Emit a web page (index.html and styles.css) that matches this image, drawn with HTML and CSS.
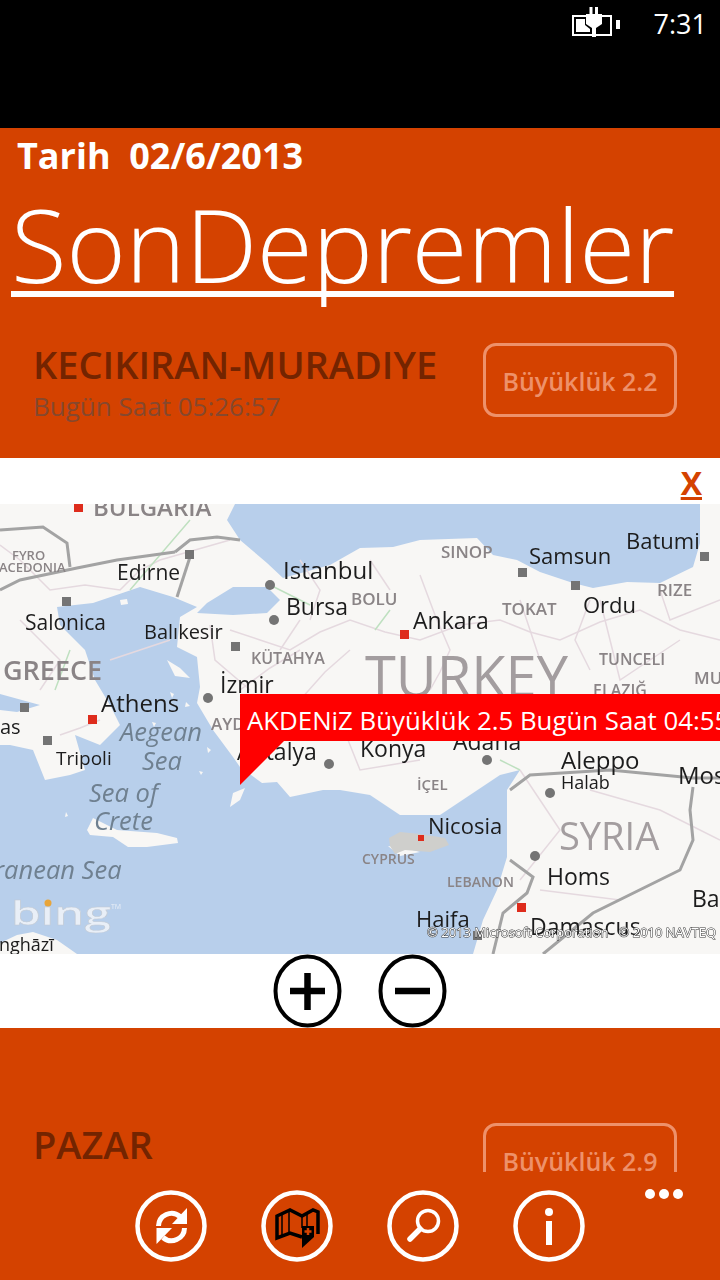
FILE: index.html
```html
<!DOCTYPE html>
<html lang="en">
<head>
    <meta charset="UTF-8">
    <meta name="viewport" content="width=device-width, initial-scale=1.0">
    <title>SonDepremler</title>
    <link rel="stylesheet" href="styles.css">
</head>
<body>

<div class="status-bar">
    <svg class="battery" width="50" height="32" viewBox="570 7 50 32">
        <path class="battery-line" d="M573 17H611V36H573Z"/>
        <path class="battery-fill" d="M576 20H585V26L590 30V33H576Z"/>
        <path class="battery-fill" d="M616 21H620V30H616Z"/>
        <path class="battery-fill" d="M589.500 8H592.500V15H595V8H598V15H602V25L596 29V38H592V29L586 25V15H589.500Z"/>
    </svg>
    <span class="clock">7:31</span>
</div>

<header class="page-head">
    <div class="date-line">Tarih  02/6/2013</div>
    <h1 class="app-title">SonDepremler</h1>
</header>

<section class="quake-row">
    <div class="quake-info">
        <div class="quake-place">KECIKIRAN-MURADIYE</div>
        <div class="quake-time">Bugün Saat 05:26:57</div>
    </div>
    <div class="quake-size">Büyüklük 2.2</div>
</section>

<section class="map-panel">
    <div class="close-row"><a class="close-link">X</a></div>
    <div class="map-box">
        <svg class="map" width="720" height="450" viewBox="0 504 720 450">
            <rect class="sea" x="0" y="504" width="720" height="450"/>
            <!-- land -->
            <path class="land" d="M0 504H235L227 520L240 540L267 563L283 578L330 565L360 548L393 547L420 540L477 538L493 555L517 560L540 572L573 583L593 588L627 582L660 583L693 567L700 543L700 504H720V954H473L483 920L497 890L507 857L507 817L507 790L520 770L500 775L470 795L440 815L400 815L370 795L340 790L323 790L290 797L277 782L262 783L240 767L233 757L213 730L197 703L200 687L197 657L177 647L180 617L197 607L173 597L140 587L93 603L57 607L60 625L85 650L95 680L110 705L120 725L100 745L75 735L85 770L70 775L45 780L33 750L10 745L0 745Z"/>
            <path class="sea" d="M0 694L40 705L17 712L0 710Z"/>
            <path class="sea" d="M197 613L207 603L233 587L267 587L280 600L267 613L233 615Z"/>
            <path class="land" d="M87 830L93 818L117 830L157 833L177 838L178 843L147 847L128 847L113 837L90 835Z"/>
            <path class="land" d="M230 807L233 793L245 788L240 800Z"/>
            <path class="land" d="M0 943L17 935L33 932L57 940L77 954H0Z"/>
            <path class="land" d="M167 660L180 668L190 678L175 676Z"/>
            <path class="land" d="M120 600L127 599L128 604L121 605Z"/>
            <path class="land" d="M170 692L174 694L172 698ZM186 702L190 706L185 707ZM152 722L156 723L154 727ZM207 747L211 750L208 753ZM199 771L203 772L201 775ZM66 812L68 816L65 817Z"/>
            <path class="land" d="M388 846L400 856L420 852L405 848Z"/>
            <path class="cyprus-rim" d="M389 838L400 832L420 834L445 838L449 845L430 852L405 850L395 854L390 846Z"/>
            <!-- province lines -->
            <g class="province">
                <path d="M0 545L20 560L50 590L85 585L120 590L140 570L160 560L195 550L230 540"/>
                <path d="M20 620L40 640L60 660L50 675L40 690M110 660L140 650L170 640M60 735L80 728L100 720"/>
                <path d="M230 630L260 640L290 650L320 632L350 620L385 632L420 640L460 625L500 620L530 632L560 640L600 622L640 610L680 630L720 640"/>
                <path d="M240 690L270 668L300 650M300 700L325 672L350 650M420 575L435 615L450 650L440 672L430 690M520 600L530 630L540 660M600 600L610 640L620 680L650 660L680 640"/>
                <path d="M250 740L295 730L340 720L350 745L360 770L390 765L420 760M520 770L540 800L560 830L540 855L520 880M540 890L580 895L620 900L650 885L680 870M590 790L625 800L660 810L690 825L720 840"/>
                <path d="M300 560L320 590L310 620M370 560L390 590M590 600L575 640L590 670M660 590L670 620L720 600M210 625L215 660L250 690M280 650L300 620"/>
            </g>
            <g class="road">
                <path d="M130 590L160 555L190 520M270 585L310 605M390 610L375 630M70 650L55 690M500 760L520 770"/>
            </g>
            <!-- country borders -->
            <g class="border">
                <path d="M0 590L20 580L77 568L117 560L175 552"/>
                <path d="M0 530L43 527L67 543L70 567"/>
                <path d="M175 552L190 540L217 537L240 540"/>
                <path d="M190 557L177 597"/>
                <path d="M510 790L530 775L610 770L693 778L720 778"/>
                <path d="M693 787L690 810L693 840L680 870L593 913L543 954"/>
                <path d="M510 860L533 877L527 893L503 913L493 954"/>
            </g>
            <!-- towns -->
            <g class="dot">
                <rect x="62" y="597" width="9" height="9"/><rect x="185" y="550" width="9" height="9"/>
                <rect x="231" y="642" width="9" height="9"/><rect x="20" y="703" width="9" height="9"/>
                <rect x="43" y="736" width="9" height="9"/><rect x="518" y="568" width="9" height="9"/>
                <rect x="571" y="581" width="9" height="9"/><rect x="700" y="552" width="9" height="9"/>
                <rect x="473" y="931" width="9" height="9"/>
                <circle cx="270" cy="585" r="5"/><circle cx="274" cy="620" r="5"/>
                <circle cx="208" cy="698" r="5"/><circle cx="329" cy="764" r="5"/>
                <circle cx="487" cy="760" r="5"/><circle cx="550" cy="793" r="5"/>
                <circle cx="535" cy="856" r="5"/>
            </g>
            <g class="capital">
                <rect x="74" y="503" width="9" height="9"/><rect x="88" y="715" width="9" height="9"/>
                <rect x="400" y="630" width="9" height="9"/><rect x="418" y="835" width="6" height="6"/>
                <rect x="517" y="903" width="9" height="9"/>
            </g>
            <!-- labels -->
            <g class="region">
                <text x="93" y="516" font-size="24">BULGARIA</text>
                <text x="12" y="560" font-size="13">FYRO</text>
                <text x="-1" y="572" font-size="13">ACEDONIA</text>
                <text x="351" y="605" font-size="17">BOLU</text>
                <text x="441" y="558" font-size="17">SINOP</text>
                <text x="502" y="615" font-size="17">TOKAT</text>
                <text x="657" y="596" font-size="17">RIZE</text>
                <text x="251" y="664" font-size="16">KÜTAHYA</text>
                <text x="599" y="665" font-size="16">TUNCELI</text>
                <text x="694" y="684" font-size="17">MU</text>
                <text x="211" y="730" font-size="17">AYDIN</text>
                <text x="3" y="680" font-size="27">GREECE</text>
                <text x="365" y="697" font-size="56" class="big">TURKEY</text>
                <text x="593" y="696" font-size="16">ELAZIĞ</text>
                <text x="417" y="790" font-size="15">İÇEL</text>
                <text x="362" y="864" font-size="14">CYPRUS</text>
                <text x="447" y="887" font-size="14">LEBANON</text>
                <text x="559" y="850" font-size="38" class="big">SYRIA</text>
            </g>
            <g class="city">
                <text x="117" y="580" font-size="21">Edirne</text>
                <text x="283" y="579" font-size="24">Istanbul</text>
                <text x="286" y="615" font-size="23">Bursa</text>
                <text x="413" y="629" font-size="23">Ankara</text>
                <text x="529" y="564" font-size="22">Samsun</text>
                <text x="626" y="549" font-size="22">Batumi</text>
                <text x="583" y="613" font-size="22">Ordu</text>
                <text x="25" y="630" font-size="21">Salonica</text>
                <text x="144" y="639" font-size="20">Balıkesir</text>
                <text x="220" y="693" font-size="23">İzmir</text>
                <text x="101" y="712" font-size="24">Athens</text>
                <text x="0" y="734" font-size="20">as</text>
                <text x="56" y="765" font-size="19">Tripoli</text>
                <text x="237" y="760" font-size="23">Antalya</text>
                <text x="360" y="757" font-size="23">Konya</text>
                <text x="453" y="750" font-size="23">Adana</text>
                <text x="561" y="769" font-size="24">Aleppo</text>
                <text x="561" y="789" font-size="18">Halab</text>
                <text x="678" y="784" font-size="24">Mos</text>
                <text x="428" y="834" font-size="22">Nicosia</text>
                <text x="547" y="885" font-size="23">Homs</text>
                <text x="692" y="907" font-size="23">Ba</text>
                <text x="416" y="927" font-size="22">Haifa</text>
                <text x="530" y="935" font-size="23">Damascus</text>
                <text x="-1" y="951" font-size="18">nghāzī</text>
            </g>
            <g class="water-name">
                <text x="120" y="741">Aegean</text>
                <text x="142" y="770">Sea</text>
                <text x="89" y="802">Sea of</text>
                <text x="94" y="830">Crete</text>
                <text x="-6" y="879">ranean Sea</text>
            </g>
            <text class="bing" transform="translate(11 925) scale(1.45 1)">bing</text>
            <circle class="bing-dot" cx="48" cy="903" r="3.500"/>
            <text class="bing-tm" x="111" y="909">TM</text>
            <text class="copyright" x="427" y="937">© 2013 Microsoft Corporation   © 2010 NAVTEQ</text>
        </svg>
        <div class="map-pop">
            <div class="map-pop-text">AKDENiZ Büyüklük 2.5 Bugün Saat 04:55</div>
            <div class="map-pop-tail"></div>
        </div>
    </div>
    <div class="zoom-row">
        <svg class="zoom-btn" width="70" height="74" viewBox="0 0 70 74">
            <ellipse cx="34.500" cy="37" rx="32" ry="34.500"/>
            <path d="M17 37H52M34.500 19V56"/>
        </svg>
        <svg class="zoom-btn" width="70" height="74" viewBox="0 0 70 74">
            <ellipse cx="34.500" cy="37" rx="32" ry="34.500"/>
            <path d="M17 37H52"/>
        </svg>
    </div>
</section>

<section class="quake-row quake-row-cut">
    <div class="quake-info">
        <div class="quake-place">PAZAR</div>
    </div>
    <div class="quake-size">Büyüklük 2.9</div>
</section>

<footer class="app-bar">
    <svg class="bar-btn" width="72" height="72" viewBox="0 0 72 72">
        <ellipse class="ring" cx="36" cy="36" rx="33.500" ry="33.500"/>
        <path class="white-line" d="M23.500 36A13 13 0 0 1 45 26.500"/>
        <path class="white-fill" d="M52 18V34H37Z"/>
        <path class="white-line" d="M49.500 38A13 13 0 0 1 28 47.500"/>
        <path class="white-fill" d="M21.500 54V38H37Z"/>
    </svg>
    <svg class="bar-btn" width="72" height="72" viewBox="0 0 72 72">
        <ellipse class="ring" cx="36" cy="36" rx="33.500" ry="33.500"/>
        <path class="map-line" d="M41 47L29 43L16 48V26L29 20L41 26L52 20L57 22V44"/>
        <path class="map-fold" d="M28 20V43M41 26V38M46 22V36M21 25V45"/>
        <path class="map-pin" d="M41 36H53V47L41 58Z"/>
        <path class="map-plus" d="M47 38V45M43.500 41.500H50.500"/>
    </svg>
    <svg class="bar-btn" width="72" height="72" viewBox="0 0 72 72">
        <ellipse class="ring" cx="36" cy="36" rx="33.500" ry="33.500"/>
        <circle class="glass" cx="41" cy="31" r="10.500"/>
        <path class="handle" d="M33 39L23 49"/>
    </svg>
    <svg class="bar-btn" width="72" height="72" viewBox="0 0 72 72">
        <ellipse class="ring" cx="36" cy="36" rx="33.500" ry="33.500"/>
        <circle class="white-fill" cx="36" cy="22" r="4"/>
        <rect class="white-fill" x="33" y="31" width="6" height="24"/>
    </svg>
    <div class="more-dots"><i></i><i></i><i></i></div>
</footer>

</body>
</html>
```

FILE: styles.css
```css
body {
    margin: 0;
    width: 720px;
    height: 1280px;
    overflow: hidden;
    background-color: #d44200;
    font-family: "Open Sans", sans-serif;
    color: white;
}

/* top black bar */
.status-bar {
    height: 128px;
    box-sizing: border-box;
    background-color: black;
    padding: 6px 13px 0 570px;
    display: flex;
    justify-content: space-between;
    align-items: flex-start;
}
.battery-line {
    fill: none;
    stroke: white;
    stroke-width: 2;
}
.battery-fill {
    fill: white;
}
.clock {
    font-size: 27px;
    font-weight: 400;
    line-height: 36px;
}

/* heading */
.page-head {
    height: 172px;
    padding: 8px 0 0 11px;
    box-sizing: border-box;
}
.date-line {
    font-size: 36px;
    font-weight: 700;
    line-height: 40px;
    white-space: pre;
    margin-left: 6px;
}
.app-title {
    margin: 12px 0 0;
    font-size: 102px;
    font-weight: 300;
    line-height: 112px;
    letter-spacing: -0.5px;
    text-decoration: underline;
    text-decoration-thickness: 6px;
    text-underline-offset: 8px;
    text-decoration-skip-ink: none;
}

/* earthquake rows */
.quake-row {
    height: 158px;
    box-sizing: border-box;
    padding: 43px 43px 0 33px;
    display: flex;
    justify-content: space-between;
    align-items: flex-start;
}
.quake-place {
    font-size: 38px;
    font-weight: 600;
    line-height: 42px;
    color: #732400;
}
.quake-time {
    font-size: 26px;
    line-height: 42px;
    color: #85482e;
}
.quake-size {
    width: 194px;
    height: 74px;
    box-sizing: border-box;
    border: 3px solid #ee916a;
    border-radius: 13px;
    text-align: center;
    line-height: 70px;
    font-size: 25px;
    font-weight: 600;
    color: #ee916a;
}
.quake-row-cut {
    height: 144px;
    padding-top: 95px;
    overflow: hidden;
}

/* white panel with the map */
.map-panel {
    background-color: white;
    height: 570px;
}
.close-row {
    height: 46px;
    padding-right: 18px;
    text-align: right;
}
.close-link {
    font-size: 32px;
    font-weight: 700;
    line-height: 50px;
    color: #d44200;
    text-decoration: underline;
}
.map-box {
    position: relative;
    height: 450px;
    overflow: hidden;
}
.map {
    display: block;
    filter: blur(0.6px);
}
.sea {
    fill: #b8cfeb;
}
.land {
    fill: #f8f7f5;
}
.cyprus-rim {
    fill: #cfcfcc;
}
.province path {
    fill: none;
    stroke: #e5d9df;
    stroke-width: 1.5;
}
.road path {
    fill: none;
    stroke: #bfe0c0;
    stroke-width: 1.5;
}
.border path {
    fill: none;
    stroke: #a3a3a3;
    stroke-width: 3;
}
.dot {
    fill: #747474;
}
.capital {
    fill: #de2c1c;
}
.map text {
    font-family: "Open Sans", sans-serif;
}
.region text {
    fill: #8a8486;
    font-weight: 600;
}
.region .big {
    fill: #a39d9f;
    font-weight: 400;
}
.city text {
    fill: #1c1c1c;
}
.water-name text {
    fill: #6f8090;
    font-size: 25.500px;
    font-style: italic;
}
.map .bing {
    fill: #e9eff7;
    font-size: 33px;
    font-weight: 600;
    stroke: #c2cad4;
    stroke-width: 0.5px;
}
.bing-dot {
    fill: #e8a53a;
}
.map .bing-tm {
    fill: #e9eff7;
    font-size: 7px;
}
.map .copyright {
    fill: white;
    font-size: 13px;
    white-space: pre;
    stroke: #333333;
    stroke-width: 1px;
    paint-order: stroke;
}

/* popup over the map */
.map-pop {
    position: absolute;
    left: 240px;
    top: 190px;
    width: 480px;
}
.map-pop-text {
    height: 47px;
    padding-left: 7px;
    background-color: #ff0000;
    font-size: 25.800px;
    line-height: 52px;
    white-space: nowrap;
    overflow: hidden;
}
.map-pop-tail {
    width: 0;
    height: 0;
    border-top: 44px solid #ff0000;
    border-right: 44px solid transparent;
}

.zoom-row {
    height: 74px;
    display: flex;
    justify-content: center;
    gap: 35px;
}
.zoom-btn ellipse, .zoom-btn path {
    fill: none;
    stroke: black;
}
.zoom-btn ellipse {
    stroke-width: 4;
}
.zoom-btn path {
    stroke-width: 6.500;
}

/* bottom app bar */
.app-bar {
    position: relative;
    height: 108px;
    padding: 18px 135px 0;
    box-sizing: border-box;
    display: flex;
    gap: 54px;
}
.ring, .white-line, .glass, .handle {
    fill: none;
    stroke: white;
}
.ring {
    stroke-width: 4.500;
}
.white-line {
    stroke-width: 5;
}
.white-fill {
    fill: white;
}
.glass {
    stroke-width: 3.500;
}
.handle {
    stroke-width: 5.500;
    stroke-linecap: round;
}
.map-line {
    fill: none;
    stroke: black;
    stroke-width: 3.500;
}
.map-fold {
    fill: none;
    stroke: black;
    stroke-width: 1.500;
}
.map-pin {
    fill: black;
}
.map-plus {
    fill: none;
    stroke: #d44200;
    stroke-width: 2.500;
}
.more-dots {
    position: absolute;
    left: 645px;
    top: 17px;
    display: flex;
    gap: 4px;
}
.more-dots i {
    width: 10px;
    height: 10px;
    border-radius: 50%;
    background-color: white;
}
```
